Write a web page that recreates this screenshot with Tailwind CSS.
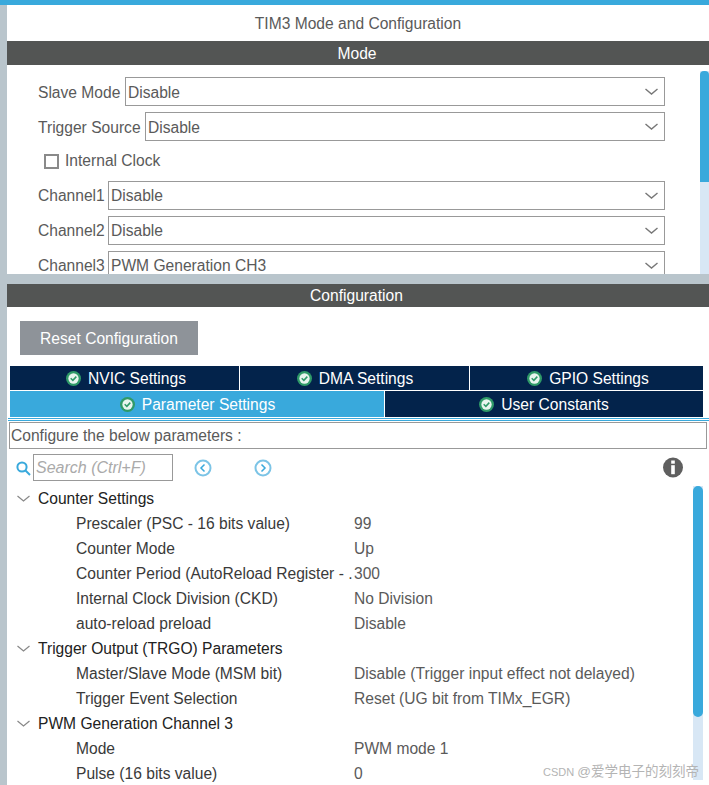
<!DOCTYPE html>
<html>
<head>
<meta charset="utf-8">
<script src="https://cdn.jsdelivr.net/npm/@tailwindcss/browser@4"></script>
</head>
<body class="m-0 bg-white">
<div class="relative w-[709px] h-[785px] overflow-hidden bg-white font-['Liberation_Sans',Arial,sans-serif] text-[15.6px] leading-[20px] text-[#5a5a5a]">
  <div class="h-[5px] bg-[#39a9dc]"></div>
  <div class="flex h-[780px]">
    <div class="w-[7px] shrink-0 bg-[#b9c5cc]"></div>
    <main class="flex flex-col w-[702px]">
      <div class="h-[36px] flex items-center justify-center pt-[1px]">TIM3 Mode and Configuration</div>
      <div class="h-[24px] flex items-center justify-center bg-[#535554] text-white pt-[1px] pr-[2px]">Mode</div>

      <section class="relative h-[209px] overflow-hidden flex flex-col pt-[12px] pl-[31px]">
        <div class="flex items-center h-[29px]">
          <span class="shrink-0 w-[87px] pt-[2px]">Slave Mode</span>
          <div class="flex items-center justify-between h-[29px] w-[540px] border border-[#999] pl-[2px] pr-[6px]"><span class="pt-[2px]">Disable</span><svg width="13" height="7" viewBox="0 0 13 7"><path d="M.5 1 6.500 6 12.500 1" fill="none" stroke="#777" stroke-width="1.400"/></svg></div>
        </div>
        <div class="flex items-center h-[29px] mt-[6px]">
          <span class="shrink-0 w-[107px] pt-[2px]">Trigger Source</span>
          <div class="flex items-center justify-between h-[29px] w-[520px] border border-[#999] pl-[2px] pr-[6px]"><span class="pt-[2px]">Disable</span><svg width="13" height="7" viewBox="0 0 13 7"><path d="M.5 1 6.500 6 12.500 1" fill="none" stroke="#777" stroke-width="1.400"/></svg></div>
        </div>
        <div class="flex items-center h-[20px] mt-[10px] pl-[6px] gap-[6px]">
          <span class="w-[15px] h-[15px] border-2 border-[#8a8a8a] bg-white"></span>
          <span>Internal Clock</span>
        </div>
        <div class="flex items-center h-[29px] mt-[10px]">
          <span class="shrink-0 w-[70px]">Channel1</span>
          <div class="flex items-center justify-between h-[29px] w-[557px] border border-[#999] pl-[2px] pr-[6px]"><span>Disable</span><svg width="13" height="7" viewBox="0 0 13 7"><path d="M.5 1 6.500 6 12.500 1" fill="none" stroke="#777" stroke-width="1.400"/></svg></div>
        </div>
        <div class="flex items-center h-[29px] mt-[6px]">
          <span class="shrink-0 w-[70px]">Channel2</span>
          <div class="flex items-center justify-between h-[29px] w-[557px] border border-[#999] pl-[2px] pr-[6px]"><span>Disable</span><svg width="13" height="7" viewBox="0 0 13 7"><path d="M.5 1 6.500 6 12.500 1" fill="none" stroke="#777" stroke-width="1.400"/></svg></div>
        </div>
        <div class="flex items-center h-[29px] mt-[6px]">
          <span class="shrink-0 w-[70px]">Channel3</span>
          <div class="flex items-center justify-between h-[29px] w-[557px] border border-[#999] pl-[2px] pr-[6px]"><span>PWM Generation CH3</span><svg width="13" height="7" viewBox="0 0 13 7"><path d="M.5 1 6.500 6 12.500 1" fill="none" stroke="#777" stroke-width="1.400"/></svg></div>
        </div>
        <div class="absolute right-0 top-[6px] bottom-0 w-[9px] bg-[#d8e7f5]">
          <div class="h-[111px] bg-[#39a9dc] rounded-t-[4px]"></div>
        </div>
      </section>

      <div class="h-[10px] -ml-[7px] w-[709px] bg-[#b9c5cc]"></div>
      <div class="h-[23px] flex items-center justify-center bg-[#535554] text-white pr-[3px]">Configuration</div>

      <section class="relative flex-1 overflow-hidden">
        <div class="pt-[14px] pl-[13px]">
          <div class="w-[178px] h-[34px] flex items-center justify-center bg-[#8e9399] text-white pt-[1px]">Reset Configuration</div>
        </div>
        <div class="mt-[11px] ml-[3px] w-[693px]">
          <div class="grid grid-cols-[230px_230px_233px] h-[24px] bg-[#03234b] text-white">
            <div class="flex items-center justify-center gap-[7px] border-r border-white pt-[2px] pl-[3px]"><svg class="-mt-[2px]" width="15" height="15" viewBox="0 0 16 16"><circle cx="8" cy="8" r="8" fill="#2f9a68"/><circle cx="8" cy="8" r="5.500" fill="#e8f5ee"/><path d="M5 7.800 7.300 10 11 6" fill="none" stroke="#2f9a68" stroke-width="1.600"/></svg><span>NVIC Settings</span></div>
            <div class="flex items-center justify-center gap-[7px] border-r border-white pt-[2px] pl-[1px]"><svg class="-mt-[2px]" width="15" height="15" viewBox="0 0 16 16"><circle cx="8" cy="8" r="8" fill="#2f9a68"/><circle cx="8" cy="8" r="5.500" fill="#e8f5ee"/><path d="M5 7.800 7.300 10 11 6" fill="none" stroke="#2f9a68" stroke-width="1.600"/></svg><span>DMA Settings</span></div>
            <div class="flex items-center justify-center gap-[7px] pt-[2px] pl-[3px]"><svg class="-mt-[2px]" width="15" height="15" viewBox="0 0 16 16"><circle cx="8" cy="8" r="8" fill="#2f9a68"/><circle cx="8" cy="8" r="5.500" fill="#e8f5ee"/><path d="M5 7.800 7.300 10 11 6" fill="none" stroke="#2f9a68" stroke-width="1.600"/></svg><span>GPIO Settings</span></div>
          </div>
          <div class="grid grid-cols-[375px_318px] h-[26px] mt-[1px] text-white">
            <div class="flex items-center justify-center gap-[7px] bg-[#39a9dc] border-r border-white pt-[1px] pl-[1px]"><svg class="-mt-[1px]" width="15" height="15" viewBox="0 0 16 16"><circle cx="8" cy="8" r="8" fill="#2f9a68"/><circle cx="8" cy="8" r="5.500" fill="#e8f5ee"/><path d="M5 7.800 7.300 10 11 6" fill="none" stroke="#2f9a68" stroke-width="1.600"/></svg><span>Parameter Settings</span></div>
            <div class="flex items-center justify-center gap-[7px] bg-[#03234b] pt-[1px]"><svg class="-mt-[1px]" width="15" height="15" viewBox="0 0 16 16"><circle cx="8" cy="8" r="8" fill="#2f9a68"/><circle cx="8" cy="8" r="5.500" fill="#e8f5ee"/><path d="M5 7.800 7.300 10 11 6" fill="none" stroke="#2f9a68" stroke-width="1.600"/></svg><span>User Constants</span></div>
          </div>
        </div>
        <div class="mt-[1px] ml-[1px] h-[3px] border-y border-[#39a9dc]"></div>
        <div class="mt-[1px] ml-[2px] w-[698px] h-[27px] border border-[#999] flex items-center pl-[1px] pt-[1px]">Configure the below parameters :</div>

        <div class="relative h-[32px] mt-[5px]">
          <svg class="absolute left-[9px] top-[7px]" width="15" height="15" viewBox="0 0 15 15"><circle cx="6" cy="6" r="4.600" fill="none" stroke="#39a9dc" stroke-width="2"/><path d="M9.500 9.500 14 14" stroke="#39a9dc" stroke-width="2"/></svg>
          <div class="absolute left-[26px] top-0 w-[140px] h-[27px] border border-[#999] flex items-center pl-[2px] italic text-[16px] text-[#aaa]">Search (Ctrl+F)</div>
          <svg class="absolute left-[187px] top-[5px]" width="18" height="18" viewBox="0 0 18 18"><circle cx="9" cy="9" r="7.500" fill="none" stroke="#7cc4e6" stroke-width="2"/><path d="M10.500 5.500 7 9l3.500 3.500" fill="none" stroke="#39a9dc" stroke-width="1.500"/></svg>
          <svg class="absolute left-[247px] top-[5px]" width="18" height="18" viewBox="0 0 18 18"><circle cx="9" cy="9" r="7.500" fill="none" stroke="#7cc4e6" stroke-width="2"/><path d="M7.500 5.500 11 9l-3.500 3.500" fill="none" stroke="#39a9dc" stroke-width="1.500"/></svg>
          <svg class="absolute left-[656px] top-[3px]" width="20" height="21" viewBox="0 0 20 21"><circle cx="10" cy="10.500" r="10" fill="#5f5f5f"/><rect x="8.200" y="3.500" width="3.600" height="3.200" fill="#fff"/><rect x="8.200" y="8.200" width="3.600" height="9" fill="#fff"/></svg>
        </div>

        <div class="absolute left-[686px] top-[179px] w-[10px] h-[294px] bg-[#d8e7f5]">
          <div class="h-[231px] bg-[#39a9dc] rounded-[5px]"></div>
        </div>

        <div class="flex flex-col text-[#3a3a3a]">
          <div class="flex items-center h-[25px] pl-[10px] text-[#222]"><svg class="mr-[8px]" width="13" height="7" viewBox="0 0 13 7"><path d="M.5 1 6.500 6 12.500 1" fill="none" stroke="#888" stroke-width="1.200"/></svg>Counter Settings</div>
          <div class="flex items-center h-[25px]"><span class="w-[347px] pl-[69px] whitespace-nowrap">Prescaler (PSC - 16 bits value)</span><span class="text-[#5a5a5a]">99</span></div>
          <div class="flex items-center h-[25px]"><span class="w-[347px] pl-[69px] whitespace-nowrap">Counter Mode</span><span class="text-[#5a5a5a]">Up</span></div>
          <div class="flex items-center h-[25px]"><span class="w-[347px] pl-[69px] whitespace-nowrap">Counter Period (AutoReload Register - .</span><span class="text-[#5a5a5a]">300</span></div>
          <div class="flex items-center h-[25px]"><span class="w-[347px] pl-[69px] whitespace-nowrap">Internal Clock Division (CKD)</span><span class="text-[#5a5a5a]">No Division</span></div>
          <div class="flex items-center h-[25px]"><span class="w-[347px] pl-[69px] whitespace-nowrap">auto-reload preload</span><span class="text-[#5a5a5a]">Disable</span></div>
          <div class="flex items-center h-[25px] pl-[10px] text-[#222]"><svg class="mr-[8px]" width="13" height="7" viewBox="0 0 13 7"><path d="M.5 1 6.500 6 12.500 1" fill="none" stroke="#888" stroke-width="1.200"/></svg>Trigger Output (TRGO) Parameters</div>
          <div class="flex items-center h-[25px]"><span class="w-[347px] pl-[69px] whitespace-nowrap">Master/Slave Mode (MSM bit)</span><span class="text-[#5a5a5a]">Disable (Trigger input effect not delayed)</span></div>
          <div class="flex items-center h-[25px]"><span class="w-[347px] pl-[69px] whitespace-nowrap">Trigger Event Selection</span><span class="text-[#5a5a5a]">Reset (UG bit from TIMx_EGR)</span></div>
          <div class="flex items-center h-[25px] pl-[10px] text-[#222]"><svg class="mr-[8px]" width="13" height="7" viewBox="0 0 13 7"><path d="M.5 1 6.500 6 12.500 1" fill="none" stroke="#888" stroke-width="1.200"/></svg>PWM Generation Channel 3</div>
          <div class="flex items-center h-[25px]"><span class="w-[347px] pl-[69px] whitespace-nowrap">Mode</span><span class="text-[#5a5a5a]">PWM mode 1</span></div>
          <div class="flex items-center h-[25px]"><span class="w-[347px] pl-[69px] whitespace-nowrap">Pulse (16 bits value)</span><span class="text-[#5a5a5a]">0</span></div>
        </div>
      </section>
    </main>
  </div>
  <div class="absolute left-[543px] top-[763px] flex items-baseline gap-[3px] leading-[18px] text-[#b4b4b4] whitespace-nowrap font-['Liberation_Sans','Noto_Sans_CJK_SC',sans-serif]"><span class="text-[11px]">CSDN</span><span class="text-[13.500px]">@爱学电子的刻刻帝</span></div>
</div>
</body>
</html>
